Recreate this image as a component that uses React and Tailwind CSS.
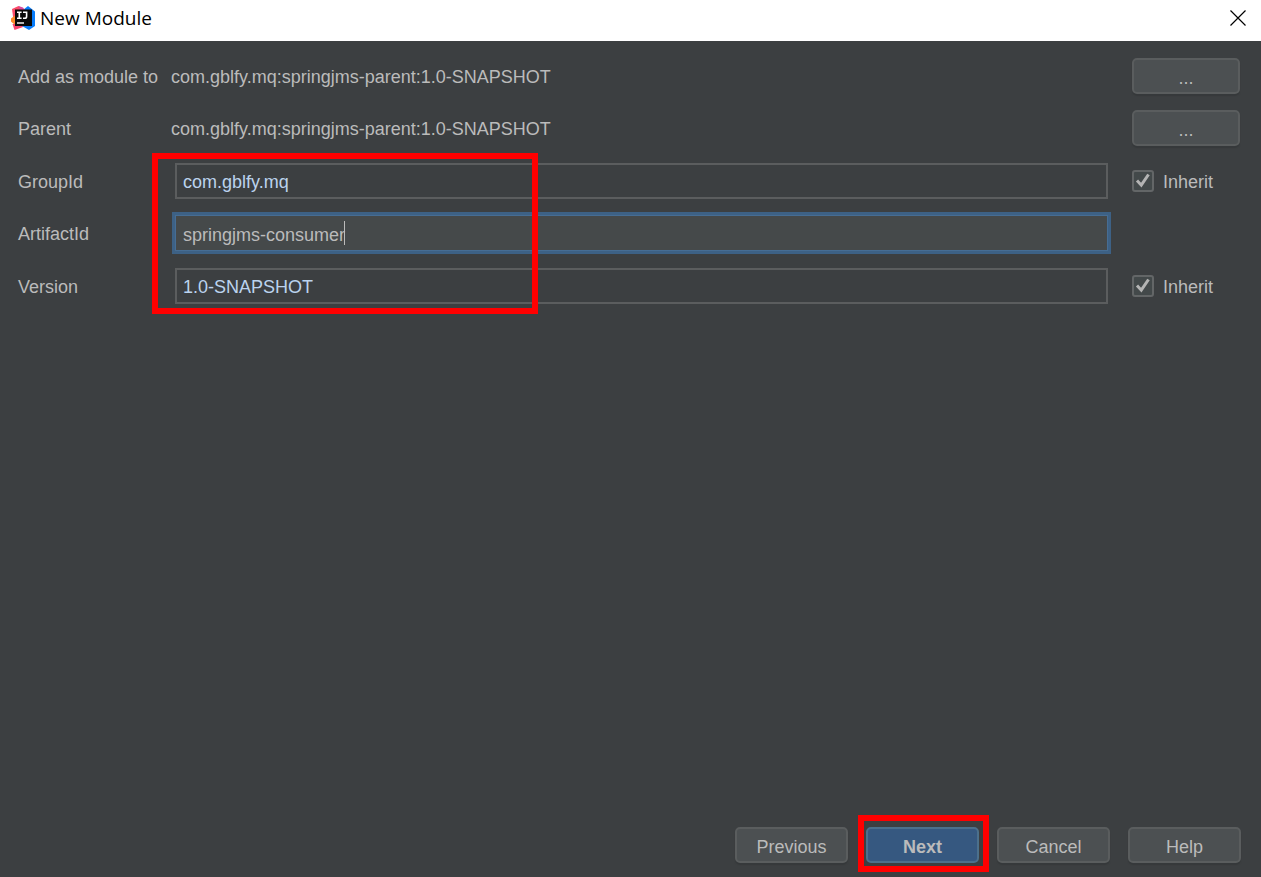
import { useState } from "react";

const BUTTON =
  "h-9 rounded-[5px] border-2 border-[#5a5d5e] bg-[#4c5052] pt-[3px] text-lg leading-[22px] text-[#bbbbbb] shadow-[0_2px_1px_#36393b]";

function AppIcon() {
  return (
    <svg viewBox="0 0 24 24" className="size-6" aria-hidden="true">
      <path d="M1 3 7.500 0 14 4v13L3 18z" fill="#fc4c6a" />
      <path d="M0 12.500 4 9.500V19L0 15.500z" fill="#fd8a2b" />
      <path d="M1.500 18H11l1 3-8.500 3z" fill="#f8446f" />
      <path d="M12 4 17 0l7 5.500V20l-6 4-7-4z" fill="#087cfa" />
      <path d="M9 4 7.500 0 12 1.500 14 4z" fill="#d84a9e" />
      <rect x="4" y="3.500" width="17" height="16.500" fill="#0a0a0a" />
      <path
        d="M6 6.200h4.600M8.300 6.200v6M6 12.200h4.600M12 6.200h3.600v4.200q0 1.800-1.800 1.800H12"
        fill="none"
        stroke="#fff"
        strokeWidth="1.600"
      />
      <path d="M6 17h7" stroke="#fff" strokeWidth="1.400" />
    </svg>
  );
}

function Label({ htmlFor, children }) {
  const Tag = htmlFor ? "label" : "span";
  return (
    <Tag htmlFor={htmlFor} className="pt-px leading-9">
      {children}
    </Tag>
  );
}

function Field({ id, initial, active = false }) {
  const [value, setValue] = useState(initial);
  return (
    <div className="relative ml-1">
      <input
        id={id}
        value={value}
        onChange={(e) => setValue(e.target.value)}
        className={
          active
            ? "block h-9 w-full border border-[#466d94] bg-[#45494a] px-[7px] pt-1 text-[#bbbbbb] outline-3 outline-[#3d6185]"
            : "block h-9 w-full border-2 border-[#5b5d5e] bg-transparent px-1.5 pt-0.5 text-[#bbd3ee] outline-none"
        }
      />
      {active && (
        <span className="absolute top-1.5 left-[169px] h-6 w-px bg-[#bbbbbb]" />
      )}
    </div>
  );
}

function Inherit({ id }) {
  const [checked, setChecked] = useState(true);
  return (
    <div className="flex h-9 items-center gap-[9px]">
      <span className="relative size-[22px] shrink-0">
        <input
          id={id}
          type="checkbox"
          checked={checked}
          onChange={() => setChecked(!checked)}
          className="block size-[22px] appearance-none rounded-[3px] border-2 border-[#636667] bg-[#43494a]"
        />
        {checked && (
          <svg
            viewBox="0 0 22 22"
            className="pointer-events-none absolute inset-0"
            aria-hidden="true"
          >
            <path
              d="M5 10.500 9.300 15.200 16.500 4.500"
              fill="none"
              stroke="#b4b4b4"
              strokeWidth="3"
            />
          </svg>
        )}
      </span>
      <label htmlFor={id} className="pt-0.5">
        Inherit
      </label>
    </div>
  );
}

const PARENT = "com.gblfy.mq:springjms-parent:1.0-SNAPSHOT";

export default function App() {
  return (
    <div className="flex min-h-screen flex-col bg-[#3c3f41] font-['Liberation_Sans',Arial,sans-serif] text-lg text-[#bbbbbb]">
      <header className="flex h-[41px] items-center bg-white pr-[15px] pb-[5px] pl-[11px] text-black">
        <AppIcon />
        <h1 className="ml-[5px] font-['Open_Sans','Segoe_UI',sans-serif] text-[19px] leading-6">
          New Module
        </h1>
        <button type="button" aria-label="Close" className="ml-auto">
          <svg viewBox="0 0 16 16" className="block size-4" aria-hidden="true">
            <path d="M.5.5l15 15M15.500.5l-15 15" stroke="#000" strokeWidth="1.200" />
          </svg>
        </button>
      </header>

      <main className="relative grid grid-cols-[153px_1fr_132px] grid-rows-[52px_53px_52px_53px_36px] items-start pt-[17px] pr-[21px] pl-[18px]">
        <Label>Add as module to</Label>
        <Label>{PARENT}</Label>
        <button type="button" className={`${BUTTON} ml-6`}>
          ...
        </button>

        <Label>Parent</Label>
        <Label>{PARENT}</Label>
        <button type="button" className={`${BUTTON} ml-6`}>
          ...
        </button>

        <Label htmlFor="group">GroupId</Label>
        <Field id="group" initial="com.gblfy.mq" />
        <div className="ml-6">
          <Inherit id="inherit-group" />
        </div>

        <Label htmlFor="artifact">ArtifactId</Label>
        <Field id="artifact" initial="springjms-consumer" active />
        <span />

        <Label htmlFor="version">Version</Label>
        <Field id="version" initial="1.0-SNAPSHOT" />
        <div className="ml-6">
          <Inherit id="inherit-version" />
        </div>

        <div className="pointer-events-none absolute top-[112px] left-[152px] h-[161px] w-[386px] border-6 border-[#ff0000]" />
      </main>

      <footer className="mt-auto flex justify-end gap-[18px] pr-5 pb-3.5">
        <button type="button" className={`${BUTTON} w-[113px]`}>
          Previous
        </button>
        <div className="relative">
          <button
            type="button"
            className="h-9 w-[113px] rounded-[5px] border-2 border-[#4c708c] bg-[#365880] pt-[3px] text-lg leading-[22px] font-bold text-[#bbbbbb]"
          >
            Next
          </button>
          <div className="pointer-events-none absolute -top-3 -right-2.5 -bottom-[9px] -left-2 border-6 border-[#ff0000]" />
        </div>
        <button type="button" className={`${BUTTON} w-[113px]`}>
          Cancel
        </button>
        <button type="button" className={`${BUTTON} w-[113px]`}>
          Help
        </button>
      </footer>
    </div>
  );
}
